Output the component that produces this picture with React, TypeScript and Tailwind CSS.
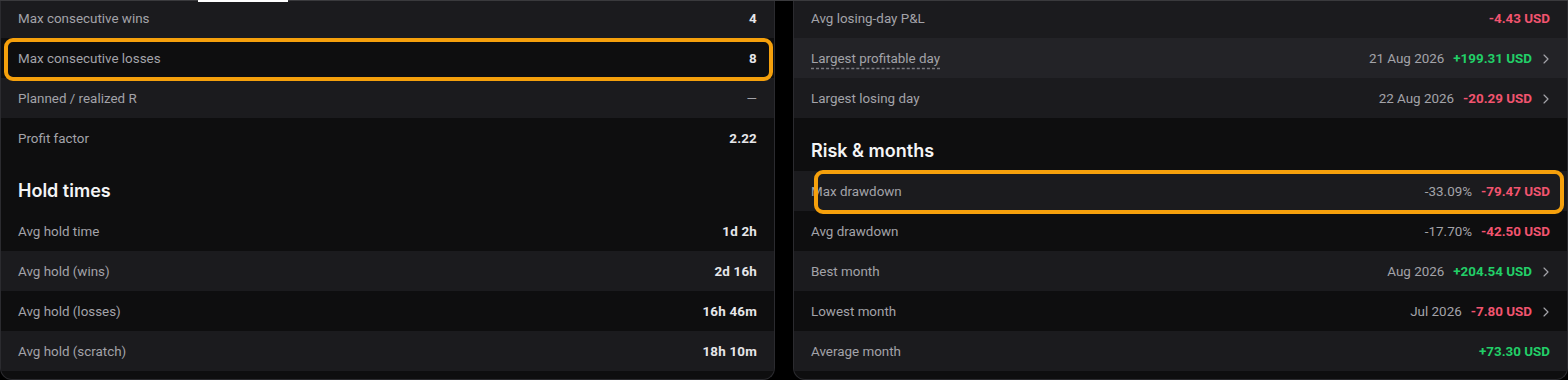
import React from 'react';
import { ChevronRight } from 'lucide-react';

type Tone = 'light' | 'dark' | 'hover';

type Row = {
  label: string;
  value: string;
  tone: Tone;
  color?: 'white' | 'red' | 'green' | 'muted';
  meta?: string;
  link?: boolean;
  dashed?: boolean;
};

const TONE_BG: Record<Tone, string> = {
  light: 'bg-[#1b1b1e]',
  dark: 'bg-transparent',
  hover: 'bg-[#232327]',
};

const VALUE_COLOR = {
  white: 'text-[#e6e6e9] font-bold tracking-[0.2px]',
  red: 'text-[#f2546f] font-bold',
  green: 'text-[#22cf68] font-bold',
  muted: 'text-[#a3a3a9] font-normal',
};

const TRADE_ROWS: Row[] = [
  { label: 'Max consecutive wins', value: '4', tone: 'light' },
  { label: 'Max consecutive losses', value: '8', tone: 'dark' },
  { label: 'Planned / realized R', value: '—', tone: 'light', color: 'muted' },
  { label: 'Profit factor', value: '2.22', tone: 'dark' },
];

const HOLD_ROWS: Row[] = [
  { label: 'Avg hold time', value: '1d 2h', tone: 'dark' },
  { label: 'Avg hold (wins)', value: '2d 16h', tone: 'light' },
  { label: 'Avg hold (losses)', value: '16h 46m', tone: 'dark' },
  { label: 'Avg hold (scratch)', value: '18h 10m', tone: 'light' },
];

const DAY_ROWS: Row[] = [
  { label: 'Avg losing-day P&L', value: '-4.43 USD', tone: 'light', color: 'red' },
  { label: 'Largest profitable day', value: '+199.31 USD', meta: '21 Aug 2026', tone: 'hover', color: 'green', link: true, dashed: true },
  { label: 'Largest losing day', value: '-20.29 USD', meta: '22 Aug 2026', tone: 'light', color: 'red', link: true },
];

const RISK_ROWS: Row[] = [
  { label: 'Max drawdown', value: '-79.47 USD', meta: '-33.09%', tone: 'light', color: 'red' },
  { label: 'Avg drawdown', value: '-42.50 USD', meta: '-17.70%', tone: 'dark', color: 'red' },
  { label: 'Best month', value: '+204.54 USD', meta: 'Aug 2026', tone: 'light', color: 'green', link: true },
  { label: 'Lowest month', value: '-7.80 USD', meta: 'Jul 2026', tone: 'dark', color: 'red', link: true },
  { label: 'Average month', value: '+73.30 USD', tone: 'light', color: 'green' },
];

function StatRow({ row }: { row: Row }) {
  return (
    <div className={`flex h-10 items-center justify-between px-[17px] pt-[2px] text-[13.4px] ${TONE_BG[row.tone]}`}>
      <span
        className={
          row.dashed
            ? 'text-[#a3a3a9] underline decoration-dashed decoration-[#7a7a80] underline-offset-[5px]'
            : 'text-[#a3a3a9]'
        }
      >
        {row.label}
      </span>
      <div className="flex items-center">
        {row.meta && <span className="mr-[9px] text-[#a3a3a9]">{row.meta}</span>}
        <span className={VALUE_COLOR[row.color ?? 'white']}>{row.value}</span>
        {row.link && <ChevronRight size={16} strokeWidth={1.75} className="ml-[6px] -mr-[4px] text-[#a3a3a9]" />}
      </div>
    </div>
  );
}

function SectionTitle({ title }: { title: string }) {
  return (
    <h3 className="px-[17px] pt-[22px] pb-[10px] text-[18px] leading-[21px] font-semibold text-[#f4f4f5] [font-family:Inter,'Noto_Sans',sans-serif]">
      {title}
    </h3>
  );
}

function Panel({ top, title, bottom }: { top: Row[]; title: string; bottom: Row[] }) {
  return (
    <div className="flex flex-col rounded-b-xl border-x border-b border-[#2b2b2f] bg-[#0e0e0f] pb-2">
      {top.map((r) => (
        <StatRow key={r.label} row={r} />
      ))}
      <SectionTitle title={title} />
      {bottom.map((r) => (
        <StatRow key={r.label} row={r} />
      ))}
    </div>
  );
}

export default function App() {
  return (
    <div className="relative h-[380px] w-[1568px] overflow-hidden bg-black [font-family:Roboto,'Liberation_Sans',sans-serif]">
      {/* tab strip edge above the cards */}
      <div className="absolute inset-x-0 top-0 z-10 flex h-[2px]">
        <div className="h-px w-[198px] bg-[#3a3a3d]" />
        <div className="h-[2px] w-[90px] bg-white" />
        <div className="h-px flex-1 bg-[#3a3a3d]" />
      </div>

      <div className="-mt-[2px] grid grid-cols-2 gap-[18px]">
        <Panel top={TRADE_ROWS} title="Hold times" bottom={HOLD_ROWS} />
        <Panel top={DAY_ROWS} title="Risk & months" bottom={RISK_ROWS} />
      </div>

      {/* highlight annotations */}
      <div className="pointer-events-none absolute left-[4px] top-[38px] h-[43px] w-[769px] rounded-[9px] border-[4px] border-[#f5a00c]" />
      <div className="pointer-events-none absolute left-[814px] top-[170px] h-[44px] w-[750px] rounded-[9px] border-[4px] border-[#f5a00c]" />
    </div>
  );
}
